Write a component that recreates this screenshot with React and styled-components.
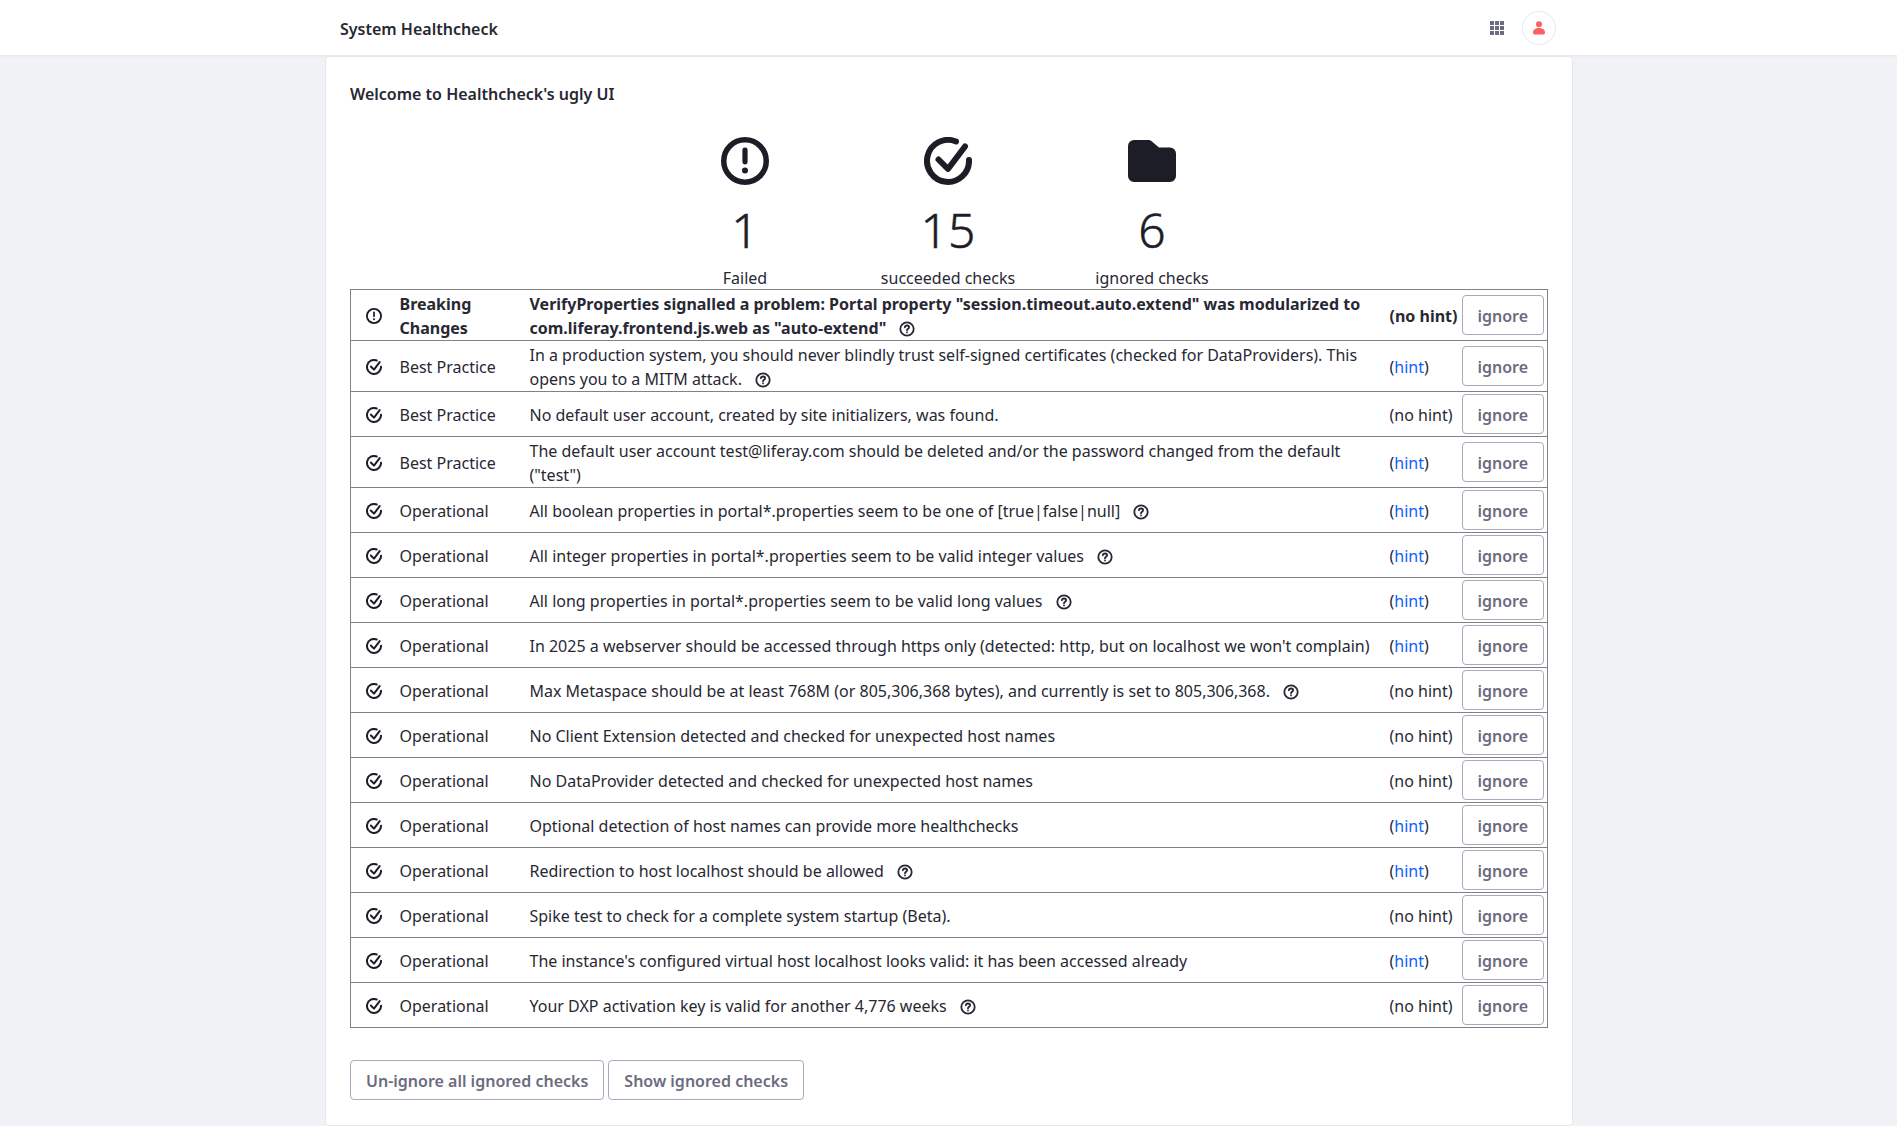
import React from "react";
import styled, { createGlobalStyle } from "styled-components";

const checks = [
  { failed: true, category: "Breaking Changes", message: 'VerifyProperties signalled a problem: Portal property "session.timeout.auto.extend" was modularized to com.liferay.frontend.js.web as "auto-extend"', help: true },
  { category: "Best Practice", message: "In a production system, you should never blindly trust self-signed certificates (checked for DataProviders). This opens you to a MITM attack.", help: true, hint: true },
  { category: "Best Practice", message: "No default user account, created by site initializers, was found." },
  { category: "Best Practice", message: 'The default user account test@liferay.com should be deleted and/or the password changed from the default ("test")', hint: true },
  { category: "Operational", message: "All boolean properties in portal*.properties seem to be one of [true|false|null]", help: true, hint: true },
  { category: "Operational", message: "All integer properties in portal*.properties seem to be valid integer values", help: true, hint: true },
  { category: "Operational", message: "All long properties in portal*.properties seem to be valid long values", help: true, hint: true },
  { category: "Operational", message: "In 2025 a webserver should be accessed through https only (detected: http, but on localhost we won't complain)", hint: true },
  { category: "Operational", message: "Max Metaspace should be at least 768M (or 805,306,368 bytes), and currently is set to 805,306,368.", help: true },
  { category: "Operational", message: "No Client Extension detected and checked for unexpected host names" },
  { category: "Operational", message: "No DataProvider detected and checked for unexpected host names" },
  { category: "Operational", message: "Optional detection of host names can provide more healthchecks", hint: true },
  { category: "Operational", message: "Redirection to host localhost should be allowed", help: true, hint: true },
  { category: "Operational", message: "Spike test to check for a complete system startup (Beta)." },
  { category: "Operational", message: "The instance's configured virtual host localhost looks valid: it has been accessed already", hint: true },
  { category: "Operational", message: "Your DXP activation key is valid for another 4,776 weeks", help: true },
];

const WarningIcon = ({ size }) => (
  <svg width={size} height={size} viewBox="0 0 48 48" fill="none">
    <circle cx="24" cy="24" r="21.25" stroke="currentColor" strokeWidth="5.5" />
    <rect x="21.4" y="10.5" width="5.2" height="17" rx="2.4" fill="currentColor" />
    <circle cx="24" cy="33.5" r="3" fill="currentColor" />
  </svg>
);

const CheckIcon = ({ size }) => (
  <svg width={size} height={size} viewBox="0 0 48 48" fill="none" stroke="currentColor" strokeWidth="6" strokeLinecap="round" strokeLinejoin="round">
    <path d="M32 4.500A21 21 0 1 0 45 23" />
    <path d="M14.500 22.500l9.500 9.500L41 9.500" />
  </svg>
);

const FolderIcon = ({ size }) => (
  <svg width={size} height={size} viewBox="0 0 48 48">
    <path fill="currentColor" d="M6 3h14c2 0 3 .6 4.500 2l6.500 5.500h11a6 6 0 0 1 6 6V39a6 6 0 0 1-6 6H6a6 6 0 0 1-6-6V9a6 6 0 0 1 6-6z" />
  </svg>
);

const QuestionIcon = () => (
  <svg width="16" height="16" viewBox="0 0 16 16" fill="none" stroke="currentColor" strokeWidth="1.800">
    <circle cx="8" cy="8" r="6.700" />
    <path d="M5.900 6.300C6 5 7 4.500 8 4.500c1.200 0 2.100.8 2.100 1.800 0 1.500-2.100 1.500-2.100 3" strokeLinecap="round" />
    <circle cx="8" cy="11.400" r=".9" fill="currentColor" stroke="none" />
  </svg>
);

const AppsIcon = () => (
  <svg width="16" height="16" viewBox="0 0 16 16" fill="currentColor">
    {[1, 6, 11].flatMap((y) =>
      [1, 6, 11].map((x) => <rect key={`${x}-${y}`} x={x} y={y} width="4" height="4" />)
    )}
  </svg>
);

const UserIcon = () => (
  <svg width="14" height="14" viewBox="0 0 14 14" fill="currentColor">
    <circle cx="7" cy="3.300" r="3" />
    <path d="M1 11.500C1 8.500 3.500 7 7 7s6 1.500 6 4.500c0 1.500-1 2-2 2H3c-1 0-2-.5-2-2z" />
  </svg>
);

const App = () => {
  return (
    <>
      <GlobalStyle />
      <Navbar>
        <Brand>System Healthcheck</Brand>
        <NavActions>
          <AppsButton>
            <AppsIcon />
          </AppsButton>
          <Avatar>
            <UserIcon />
          </Avatar>
        </NavActions>
      </Navbar>
      <Card>
        <Welcome>Welcome to Healthcheck's ugly UI</Welcome>
        <Stats>
          <Stat $width={202}>
            <WarningIcon size={48} />
            <Count>1</Count>
            <StatLabel>Failed</StatLabel>
          </Stat>
          <Stat $width={204}>
            <CheckIcon size={48} />
            <Count>15</Count>
            <StatLabel>succeeded checks</StatLabel>
          </Stat>
          <Stat $width={204}>
            <FolderIcon size={48} />
            <Count>6</Count>
            <StatLabel>ignored checks</StatLabel>
          </Stat>
        </Stats>
        <Table>
          <colgroup>
            <col width="49" />
            <col width="130" />
            <col />
            <col width="72" />
            <col width="86" />
          </colgroup>
          <tbody>
            {checks.map((check, i) => (
              <Row key={i} $failed={check.failed}>
                <IconCell>
                  {check.failed ? <WarningIcon size={16} /> : <CheckIcon size={16} />}
                </IconCell>
                <Cell>{check.category}</Cell>
                <MessageCell>
                  {check.message}
                  {check.help && (
                    <Help>
                      <QuestionIcon />
                    </Help>
                  )}
                </MessageCell>
                <HintCell>
                  {check.hint ? (
                    <>
                      (<HintLink href="#">hint</HintLink>)
                    </>
                  ) : (
                    "(no hint)"
                  )}
                </HintCell>
                <ButtonCell>
                  <OutlineButton>ignore</OutlineButton>
                </ButtonCell>
              </Row>
            ))}
          </tbody>
        </Table>
        <Footer>
          <OutlineButton>Un-ignore all ignored checks</OutlineButton>
          <OutlineButton>Show ignored checks</OutlineButton>
        </Footer>
      </Card>
    </>
  );
};

const GlobalStyle = createGlobalStyle`
  * {
    box-sizing: border-box;
  }
  html, body {
    height: 100%;
  }
  body {
    margin: 0;
    background-color: #f1f2f5;
    color: #272833;
    font-family: "Noto Sans", sans-serif;
    font-size: 16px;
    line-height: 24px;
    overflow: hidden;
  }
`;

const Navbar = styled.header`
  height: 55px;
  background-color: #fff;
  display: flex;
  align-items: center;
  justify-content: space-between;
  padding: 0 341px 0 340px;
  box-shadow: 0 1px 2px rgba(39, 40, 51, 0.06);
`;

const Brand = styled.span`
  font-weight: 600;
  color: #272833;
  padding-top: 3px;
`;

const NavActions = styled.div`
  display: flex;
  align-items: center;
  gap: 17px;
  padding-top: 1px;
`;

const AppsButton = styled.span`
  display: flex;
  color: #6b6c7e;
`;

const Avatar = styled.span`
  width: 34px;
  height: 34px;
  border-radius: 50%;
  border: 1px solid #e7e7ed;
  background-color: #fff;
  color: #ff5f5f;
  display: flex;
  align-items: center;
  justify-content: center;
`;

const Card = styled.main`
  width: 1248px;
  margin: 1px 0 0 325px;
  padding: 25px 24px 25px;
  background-color: #fff;
  border: 1px solid #e7e7ed;
  border-radius: 4px;
`;

const Welcome = styled.div`
  font-weight: 600;
  height: 24px;
`;

const Stats = styled.div`
  display: flex;
  justify-content: center;
  margin-top: 31px;
`;

const Stat = styled.div`
  width: ${(p) => p.$width}px;
  display: flex;
  flex-direction: column;
  align-items: center;
  color: #1c1d26;
`;

const Count = styled.div`
  font-size: 48px;
  font-weight: 300;
  -webkit-text-stroke: 0.5px #1c1d26;
  line-height: 58px;
  margin-top: 16px;
`;

const StatLabel = styled.div`
  color: #272833;
  height: 23px;
  margin-top: 7px;
`;

const Table = styled.table`
  width: 1198px;
  table-layout: fixed;
  border-collapse: collapse;
  border: 1px solid #828282;
`;

const Row = styled.tr`
  border-bottom: 1px solid #828282;
  font-weight: ${(p) => (p.$failed ? 700 : 400)};
`;

const Cell = styled.td`
  padding: 2px 0 0;
  vertical-align: middle;
`;

const IconCell = styled(Cell)`
  padding: 2px 0 0 15px;
  line-height: 0;
  color: #1c1d26;
`;

const MessageCell = styled(Cell)`
  padding: 2px 16px 0 0;
`;

const Help = styled.span`
  display: inline-block;
  line-height: 0;
  margin-left: 13px;
  vertical-align: -3px;
`;

const HintCell = styled(Cell)`
  white-space: nowrap;
`;

const HintLink = styled.a`
  color: #0b5fff;
  text-decoration: none;
`;

const ButtonCell = styled(Cell)`
  padding: 2px 0;
`;

const OutlineButton = styled.button`
  height: 40px;
  padding: 2px 15px 0;
  background-color: #fff;
  border: 1px solid #a7a9bc;
  border-radius: 4px;
  color: #6b6c7e;
  font-family: inherit;
  font-size: 16px;
  font-weight: 600;
  line-height: 24px;
  display: block;
`;

const Footer = styled.div`
  display: flex;
  gap: 4px;
  margin-top: 32px;
`;

export default App;
